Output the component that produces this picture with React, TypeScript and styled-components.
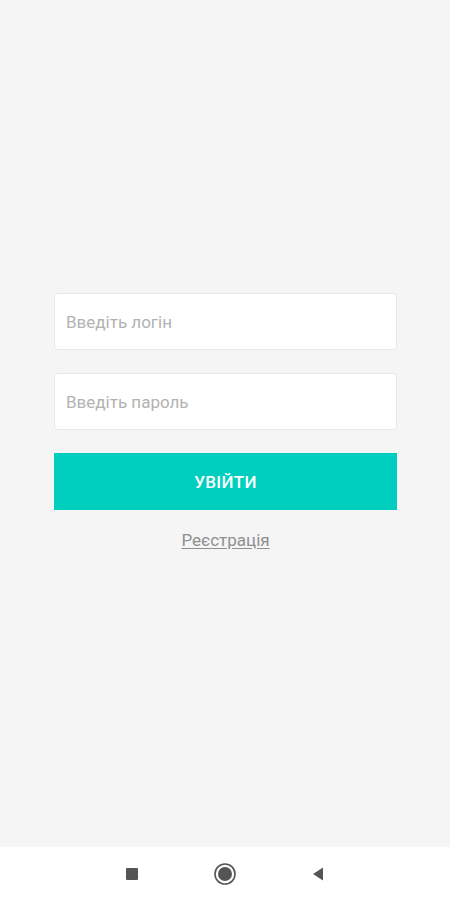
import styled, { createGlobalStyle } from 'styled-components';

const GlobalStyle = createGlobalStyle`
  html, body {
    margin: 0;
    padding: 0;
    background: #f5f5f5;
    font-family: Roboto, 'Noto Sans', sans-serif;
  }
  * {
    box-sizing: border-box;
  }
`;

const Screen = styled.div`
  width: 450px;
  height: 900px;
  display: flex;
  flex-direction: column;
  background: #f5f5f5;
`;

const Main = styled.main`
  flex: 1;
  display: flex;
  flex-direction: column;
  justify-content: center;
  align-items: center;
  padding-bottom: 4px;
`;

const Form = styled.form`
  width: 343px;
  margin-left: 1px;
  display: flex;
  flex-direction: column;
  align-items: stretch;
`;

const Input = styled.input`
  height: 57px;
  margin-bottom: 23px;
  padding: 0 11px;
  border: 1px solid #e8e8e8;
  border-radius: 4px;
  background: #ffffff;
  font-family: Roboto, sans-serif;
  font-size: 17px;
  color: #333;
  outline: none;

  &::placeholder {
    color: #b2b2b2;
    opacity: 1;
  }
`;

const Button = styled.button`
  height: 57px;
  border: none;
  border-radius: 0;
  background: #00cfbf;
  color: #ffffff;
  font-family: Roboto, sans-serif;
  font-size: 17px;
  font-weight: 500;
  letter-spacing: 0.3px;
`;

const Link = styled.a`
  align-self: center;
  margin-top: 20px;
  font-size: 17px;
  color: #8f8f8f;
  text-decoration: underline;
  text-underline-offset: 2px;
`;

const NavBar = styled.nav`
  height: 53px;
  background: #ffffff;
  display: flex;
  align-items: center;
  justify-content: center;
`;

const NavSlot = styled.div`
  width: 93px;
  display: flex;
  justify-content: center;
  align-items: center;
`;

const App = () => {
  return (
    <>
      <GlobalStyle />
      <Screen>
        <Main>
          <Form onSubmit={(e) => e.preventDefault()}>
            <Input placeholder="Введіть логін" />
            <Input type="password" placeholder="Введіть пароль" />
            <Button type="submit">УВІЙТИ</Button>
            <Link href="#">Реєстрація</Link>
          </Form>
        </Main>
        <NavBar>
          <NavSlot>
            <svg width="14" height="14" viewBox="0 0 14 14">
              <rect x="1" y="1" width="12" height="12" rx="1" fill="#555" />
            </svg>
          </NavSlot>
          <NavSlot>
            <svg width="24" height="24" viewBox="0 0 24 24">
              <circle cx="12" cy="12" r="10" fill="none" stroke="#555" strokeWidth="1.6" />
              <circle cx="12" cy="12" r="7" fill="#555" />
            </svg>
          </NavSlot>
          <NavSlot>
            <svg width="14" height="16" viewBox="0 0 14 16">
              <path d="M12 1.5 L2 8 L12 14.5 Z" fill="#555" />
            </svg>
          </NavSlot>
        </NavBar>
      </Screen>
    </>
  );
};

export default App;
